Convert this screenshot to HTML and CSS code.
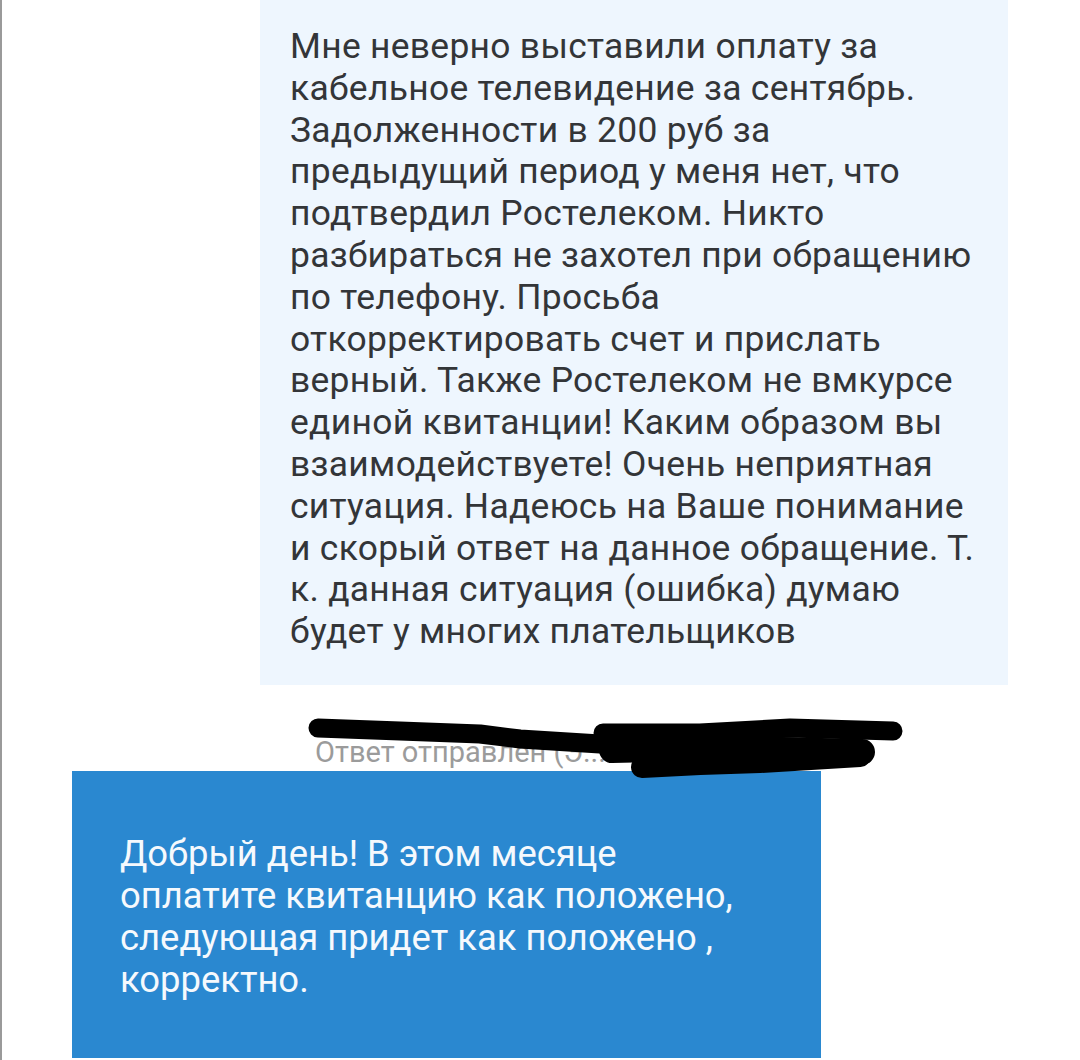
FILE: index.html
```html
<!DOCTYPE html>
<html lang="ru">
<head>
<meta charset="utf-8">
<title>Обращение</title>
<link rel="stylesheet" href="styles.css">
</head>
<body>
<div class="page">
  <div class="bubble-in">
    <p class="msg">Мне неверно выставили оплату за<br>кабельное телевидение за сентябрь.<br>Задолженности в 200 руб за<br>предыдущий период у меня нет, что<br>подтвердил Ростелеком. Никто<br>разбираться не захотел при обращению<br>по телефону. Просьба<br>откорректировать счет и прислать<br>верный. Также Ростелеком не вмкурсе<br>единой квитанции! Каким образом вы<br>взаимодействуете! Очень неприятная<br>ситуация. Надеюсь на Ваше понимание<br>и скорый ответ на данное обращение. Т.<br>к. данная ситуация (ошибка) думаю<br>будет у многих плательщиков</p>
  </div>
  <div class="meta">Ответ отправлен (Э...</div>
  <div class="bubble-out">
    <p class="msg-out">Добрый день! В этом месяце<br>оплатите квитанцию как положено,<br>следующая придет как положено ,<br>корректно.</p>
  </div>
  <svg class="scribble" width="1080" height="1060" viewBox="0 0 1080 1060" aria-hidden="true">
    <g fill="none" stroke="#000" stroke-linecap="round" stroke-linejoin="round">
      <path d="M318,728 L400,731 L480,734 L520,739 L600,744 L700,748 L860,753" stroke-width="19"/>
      <path d="M603,733 L700,733 L790,728 L893,731" stroke-width="19"/>
      <path d="M612,750 L700,748 L862,752" stroke-width="26"/>
      <path d="M642,767 L700,764 L760,762 L860,756" stroke-width="22"/>
    </g>
  </svg>
</div>
</body>
</html>
```
FILE: styles.css
```css
html, body {
  margin: 0;
  padding: 0;
  background: #ffffff;
}
.page {
  position: relative;
  min-height: 1060px;
  border-left: 2px solid #9a9a9a;
  box-sizing: border-box;
  overflow: hidden;
  font-family: Roboto, "Noto Sans", sans-serif;
}
.bubble-in {
  margin-left: 258px;
  width: 748px;
  box-sizing: border-box;
  background: #eef6fe;
  padding: 26px 10px 32px 30px;
}
.msg {
  margin: 0;
  font-size: 35.4px;
  line-height: 41.8px;
  letter-spacing: 0.3px;
  color: #333538;
  white-space: nowrap;
}
.meta {
  margin-top: 50px;
  margin-left: 313px;
  font-size: 29px;
  line-height: 34px;
  color: #9b9b9b;
  white-space: nowrap;
}
.bubble-out {
  margin-top: 2px;
  margin-left: 70px;
  width: 749px;
  box-sizing: border-box;
  background: #2a88d0;
  padding: 62px 20px 57px 48px;
}
.msg-out {
  margin: 0;
  font-size: 36.4px;
  line-height: 42px;
  color: #f5f9fd;
  white-space: nowrap;
}
.scribble {
  position: absolute;
  left: -2px;
  top: 0;
}
```
